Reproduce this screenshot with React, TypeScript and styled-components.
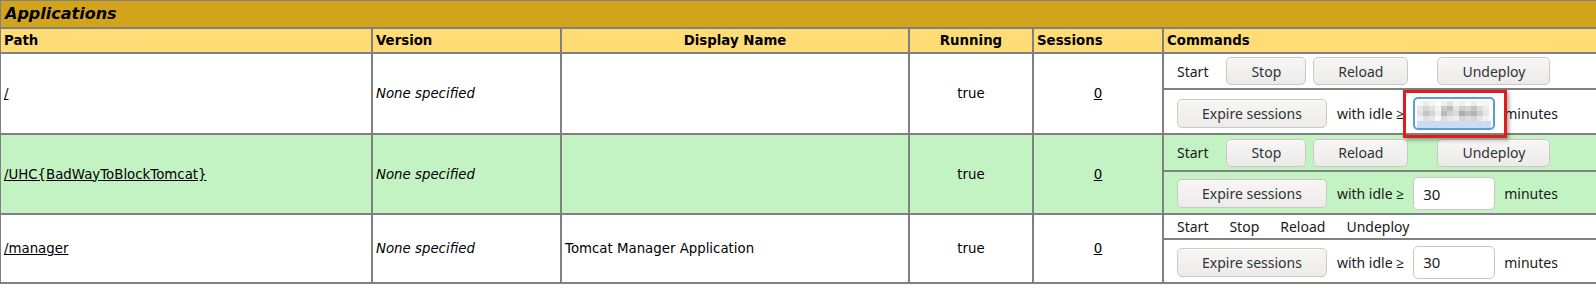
import React from 'react'
import styled, { createGlobalStyle } from 'styled-components'

type App = {
  path: string
  version: string
  display: string
  running: string
  sessions: string
  bg: string
  buttons: boolean
  idle: string
  censored?: boolean
  topHeight: number
  bottomHeight: number
}

const apps: App[] = [
  {
    path: '/',
    version: 'None specified',
    display: '',
    running: 'true',
    sessions: '0',
    bg: '#ffffff',
    buttons: true,
    idle: '',
    censored: true,
    topHeight: 34,
    bottomHeight: 43,
  },
  {
    path: '/UHC{BadWayToBlockTomcat}',
    version: 'None specified',
    display: '',
    running: 'true',
    sessions: '0',
    bg: '#c3f3c3',
    buttons: true,
    idle: '30',
    topHeight: 35,
    bottomHeight: 41,
  },
  {
    path: '/manager',
    version: 'None specified',
    display: 'Tomcat Manager Application',
    running: 'true',
    sessions: '0',
    bg: '#ffffff',
    buttons: false,
    idle: '30',
    topHeight: 23,
    bottomHeight: 42,
  },
]

const columns = [372, 189, 348, 124, 130, 437]

// grey levels for the pixelated (censored) field value
const mosaic = [
  [250, 236, 244, 252, 238, 226, 246, 240, 250, 236, 248, 244],
  [232, 214, 226, 244, 200, 190, 228, 206, 214, 196, 220, 236],
  [226, 196, 212, 238, 186, 208, 220, 172, 190, 180, 206, 230],
  [240, 224, 232, 248, 222, 232, 238, 214, 222, 216, 230, 242],
]

const GlobalStyle = createGlobalStyle`
  html, body {
    margin: 0;
    padding: 0;
    background: #ffffff;
    overflow: hidden;
  }
`

const Table = styled.table`
  width: 1600px;
  table-layout: fixed;
  border-collapse: separate;
  border-spacing: 0;
  border-bottom: 1px solid #808080;
  font-family: 'DejaVu Sans', Verdana, sans-serif;
  font-size: 13.33px;
  color: #000000;
`

const TitleCell = styled.td`
  box-sizing: border-box;
  padding: 0 4px;
  height: 28px;
  border: 1px solid #808080;
  background: #d2a41c;
  font-size: 16px;
  font-weight: bold;
  font-style: italic;
  line-height: 26px;
`

const HeaderCell = styled.th<{ $align?: string }>`
  box-sizing: border-box;
  height: 25px;
  padding: 0 3px;
  border: 1px solid #808080;
  background: #ffdc75;
  font-weight: bold;
  text-align: ${({ $align }) => $align || 'left'};
  line-height: 23px;
`

const Cell = styled.td<{ $bg: string; $align?: string; $italic?: boolean }>`
  box-sizing: border-box;
  padding: 0 3px;
  border: 1px solid #808080;
  background: ${({ $bg }) => $bg};
  text-align: ${({ $align }) => $align || 'left'};
  vertical-align: middle;
  font-style: ${({ $italic }) => ($italic ? 'italic' : 'normal')};
  white-space: nowrap;
`

const CommandCell = styled.td<{ $bg: string }>`
  box-sizing: border-box;
  padding: 0;
  border: 1px solid #808080;
  background: ${({ $bg }) => $bg};
`

const CommandRow = styled.div<{ $height: number; $shift?: number }>`
  display: flex;
  align-items: center;
  height: ${({ $height }) => $height}px;
  padding: ${({ $shift }) => $shift || 0}px 0 0 13px;
  box-sizing: border-box;
  font-family: 'Noto Sans', 'Open Sans', sans-serif;
  font-size: 14px;
  color: #1a1a1a;
  white-space: nowrap;
`

const Link = styled.a`
  color: #000000;
  text-decoration: underline;
`

const Label = styled.span<{ $gap?: number }>`
  margin-right: ${({ $gap }) => $gap || 0}px;
  white-space: nowrap;
`

const Button = styled.button<{ $gap?: number; $height?: number }>`
  flex: none;
  height: ${({ $height }) => $height || 28}px;
  margin: 0 ${({ $gap }) => $gap || 0}px 0 0;
  padding: 0 24px;
  border: 1px solid #cdc7c2;
  border-radius: 5px;
  background: linear-gradient(#f7f6f5, #edebe9);
  box-shadow: inset 0 1px #ffffff;
  font-family: 'Noto Sans', 'Open Sans', sans-serif;
  font-size: 14px;
  color: #2e3436;
  white-space: nowrap;
`

const FieldWrap = styled.span`
  position: relative;
  flex: none;
  display: block;
  width: 82px;
  height: 33px;
  margin-right: 9px;
`

const IdleInput = styled.input<{ $focused?: boolean }>`
  display: block;
  box-sizing: border-box;
  width: 82px;
  height: 33px;
  margin: 0;
  padding: 0 0 0 9px;
  border: ${({ $focused }) => ($focused ? '2px solid #5b9be0' : '1px solid #cdc7c2')};
  border-radius: 5px;
  background: #ffffff;
  font-family: 'Noto Sans', 'Open Sans', sans-serif;
  font-size: 15px;
  color: #1a1a1a;
  outline: none;
`

const Mosaic = styled.svg`
  position: absolute;
  left: 4px;
  top: 4px;
`

const Highlight = styled.span`
  position: absolute;
  left: -10px;
  top: -7px;
  width: 104px;
  height: 48px;
  box-sizing: border-box;
  border: 3px solid #e21b1b;
  box-shadow: 2px 2px 4px rgba(0, 0, 0, 0.35);
  pointer-events: none;
  z-index: 2;
`

const CensoredValue = () => (
  <Mosaic width="74" height="27" viewBox="0 0 74 27">
    {mosaic.map((row, r) =>
      row.map((g, c) => <rect key={`${r}-${c}`} x={c * 6} y={r * 5} width="6" height="5" fill={`rgb(${g},${g},${g})`} />),
    )}
    <rect x="0" y="20" width="74" height="7" fill="#c9dcf4" />
  </Mosaic>
)

export default function AppTable() {
  return (
    <>
      <GlobalStyle />
      <Table>
        <colgroup>
          {columns.map((w, i) => (
            <col key={i} style={{ width: w }} />
          ))}
        </colgroup>
        <tbody>
          <tr>
            <TitleCell colSpan={6}>Applications</TitleCell>
          </tr>
          <tr>
            <HeaderCell>Path</HeaderCell>
            <HeaderCell>Version</HeaderCell>
            <HeaderCell $align="center">Display Name</HeaderCell>
            <HeaderCell $align="center">Running</HeaderCell>
            <HeaderCell>Sessions</HeaderCell>
            <HeaderCell>Commands</HeaderCell>
          </tr>
          {apps.map((app) => (
            <React.Fragment key={app.path}>
              <tr>
                <Cell $bg={app.bg} rowSpan={2}>
                  <Link href="#">{app.path}</Link>
                </Cell>
                <Cell $bg={app.bg} rowSpan={2} $italic>
                  {app.version}
                </Cell>
                <Cell $bg={app.bg} rowSpan={2}>
                  {app.display}
                </Cell>
                <Cell $bg={app.bg} rowSpan={2} $align="center">
                  {app.running}
                </Cell>
                <Cell $bg={app.bg} rowSpan={2} $align="center">
                  <Link href="#">{app.sessions}</Link>
                </Cell>
                <CommandCell $bg={app.bg}>
                  {app.buttons ? (
                    <CommandRow $height={app.topHeight}>
                      <Label $gap={18}>Start</Label>
                      <Button $gap={7}>Stop</Button>
                      <Button $gap={29}>Reload</Button>
                      <Button>Undeploy</Button>
                    </CommandRow>
                  ) : (
                    <CommandRow $height={app.topHeight}>
                      <Label $gap={21}>Start</Label>
                      <Label $gap={21}>Stop</Label>
                      <Label $gap={21}>Reload</Label>
                      <Label>Undeploy</Label>
                    </CommandRow>
                  )}
                </CommandCell>
              </tr>
              <tr>
                <CommandCell $bg={app.bg}>
                  <CommandRow $height={app.bottomHeight} $shift={app.censored ? 3 : 2}>
                    <Button $gap={10} $height={29}>
                      Expire sessions
                    </Button>
                    <Label $gap={9}>with idle ≥</Label>
                    <FieldWrap>
                      <IdleInput $focused={app.censored} defaultValue={app.idle} />
                      {app.censored && <CensoredValue />}
                      {app.censored && <Highlight />}
                    </FieldWrap>
                    <Label>minutes</Label>
                  </CommandRow>
                </CommandCell>
              </tr>
            </React.Fragment>
          ))}
        </tbody>
      </Table>
    </>
  )
}
